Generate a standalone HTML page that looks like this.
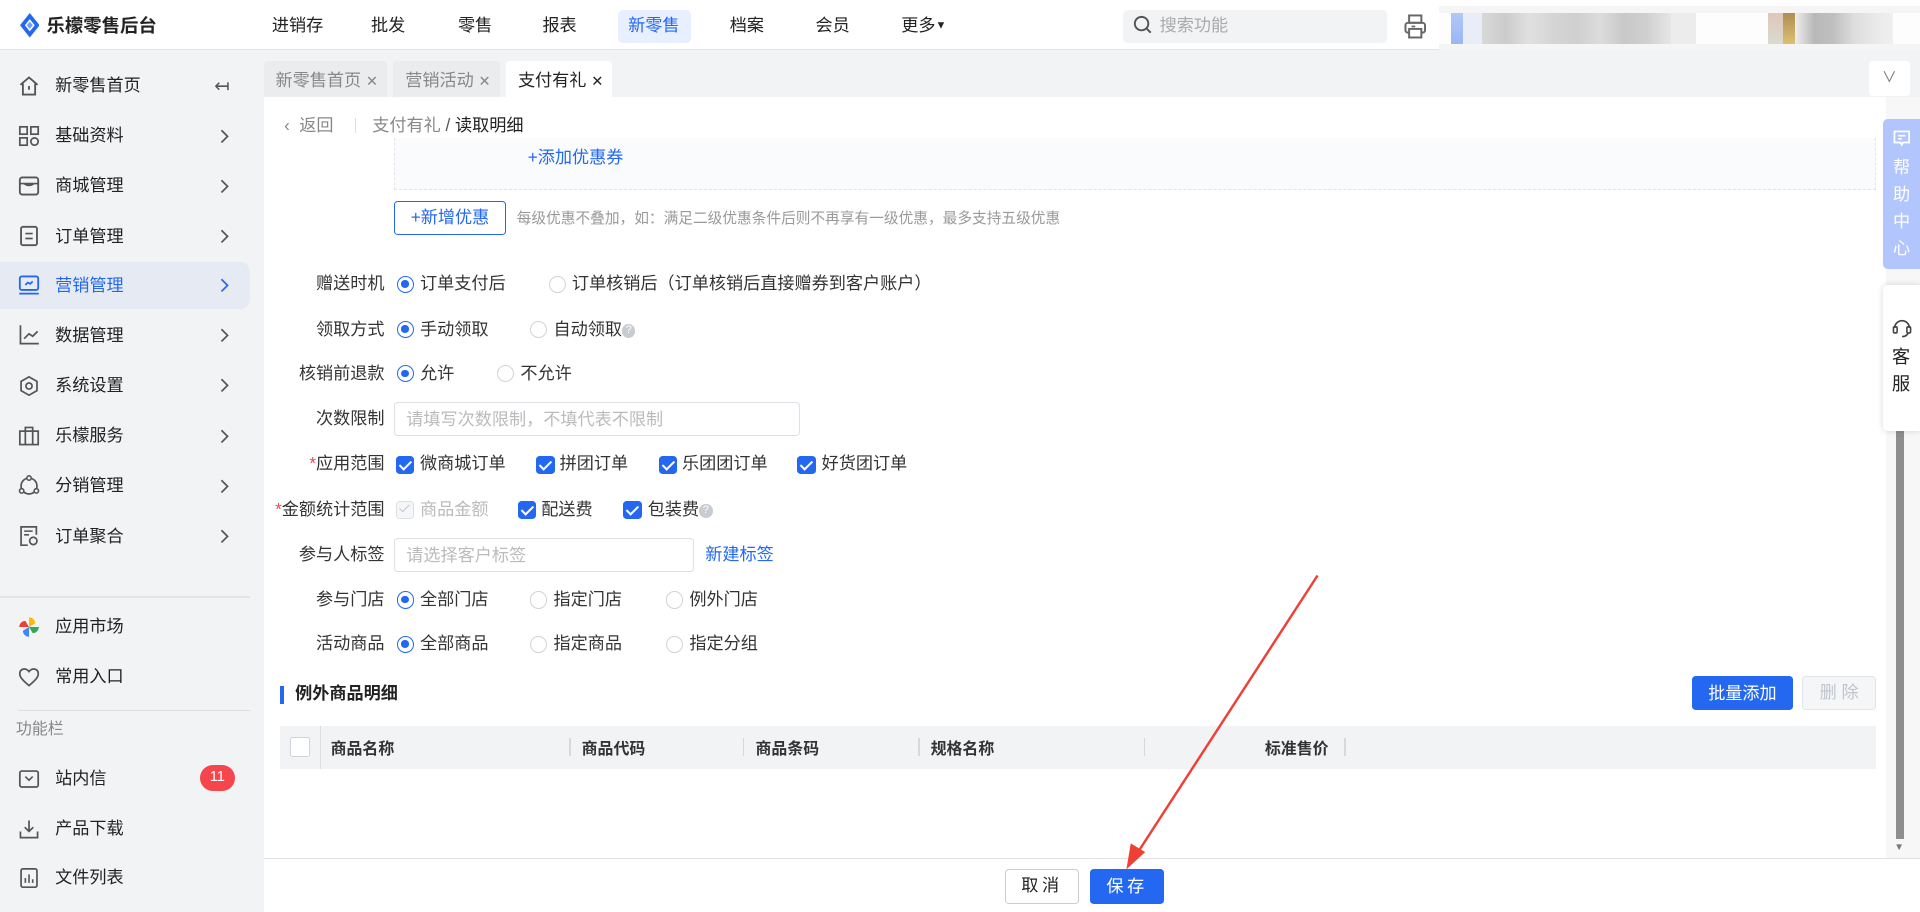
<!DOCTYPE html>
<html><head><meta charset="utf-8">
<style>
html{zoom:1.2244898}
*{box-sizing:border-box;margin:0;padding:0}
body{width:1568px;height:745px;overflow:hidden;position:relative;background:#fff;font-family:"Liberation Sans","Noto Sans CJK SC",sans-serif;color:#333;font-size:14px;line-height:1.15}
.a{position:absolute;white-space:nowrap}
.top{left:0;top:0;width:1568px;height:41px;background:#fff;border-bottom:1px solid #e3e3e3}
.nav{top:13px;font-size:14px;color:#222}
.side{left:0;top:41px;width:216px;height:704px;background:#f2f3f5}
.si{left:0;width:204px;height:38px;font-size:14px;color:#222}
.si .t{position:absolute;left:45px;top:11px}
.si svg.ic{position:absolute;left:15px;top:10px}
.si .ar{position:absolute;left:179px;top:13px}
.lbl{font-size:14px;color:#333;text-align:right;width:120px;left:194px}
.radio{width:14px;height:14px;border:1px solid #d0d3d9;border-radius:50%;background:#fff}
.radio.on{border:1px solid #2468f2}
.radio.on::after{content:"";position:absolute;left:3px;top:3px;width:6px;height:6px;border-radius:50%;background:#2468f2}
.cb{width:15px;height:15px;border-radius:3px;background:#2468f2}
.cb::after{content:"";position:absolute;left:5px;top:2px;width:4px;height:8px;border:solid #fff;border-width:0 2px 2px 0;transform:rotate(45deg)}
.q{display:inline-block;width:11px;height:11px;border-radius:50%;background:#c7cbd2;color:#fff;font-size:9px;line-height:11px;text-align:center;vertical-align:1px}
.th{top:605px;font-size:13px;font-weight:bold;color:#333}
.vd{width:1px;height:14px;background:#d8d8d8;top:603px}
</style></head><body>

<div class="a top"></div>
<svg class="a" style="left:16px;top:11px" width="16" height="20" viewBox="0 0 16 20"><path d="M8 0 L16 10 L8 20 L0 10 Z" fill="#2468f2"/><path d="M8 5 L12 10 L8 15 L4 10Z" fill="#fff"/><path d="M8 7 L10.5 10 L8 13 L5.5 10Z" fill="#6fa0ff"/></svg>
<div class="a" style="left:38px;top:12px;font-size:15px;font-weight:bold;color:#222">乐檬零售后台</div>
<div class="a nav" style="left:222px">进销存</div>
<div class="a nav" style="left:303px">批发</div>
<div class="a nav" style="left:374px">零售</div>
<div class="a nav" style="left:443px">报表</div>
<div class="a" style="left:505px;top:8px;width:59px;height:27px;background:#e8efff;border-radius:4px"></div>
<div class="a nav" style="left:513px;color:#2468f2">新零售</div>
<div class="a nav" style="left:596px">档案</div>
<div class="a nav" style="left:666px">会员</div>
<div class="a nav" style="left:736px">更多<span style="font-size:9px;vertical-align:2px">▼</span></div>
<div class="a" style="left:917px;top:8px;width:216px;height:27px;background:#f2f3f5;border-radius:4px"></div>
<svg class="a" style="left:925px;top:12px" width="16" height="16" viewBox="0 0 16 16"><circle cx="7" cy="7" r="5.5" fill="none" stroke="#555" stroke-width="1.6"/><path d="M11 11 L14.5 14.5" stroke="#555" stroke-width="1.6"/></svg>
<div class="a" style="left:947px;top:13px;font-size:14px;color:#aaa">搜索功能</div>
<svg class="a" style="left:1146px;top:11px" width="20" height="22" viewBox="0 0 20 22"><rect x="5" y="2" width="10" height="6" fill="none" stroke="#666" stroke-width="1.6"/><rect x="2" y="8" width="16" height="8" rx="2" fill="none" stroke="#666" stroke-width="1.6"/><rect x="5" y="13" width="10" height="7" fill="#fff" stroke="#666" stroke-width="1.6"/><path d="M7 11h3" stroke="#666" stroke-width="1.4"/></svg>
<div class="a" style="left:1175px;top:5px;width:393px;height:45px;background:#f5f5f5"></div>
<div class="a" style="left:1175px;top:11px;width:393px;height:25px;background:#fdfdfd"></div>
<div class="a" style="left:1185px;top:11px;width:10px;height:25px;background:linear-gradient(#b2c8f7,#99b6f5)"></div>
<div class="a" style="left:1195px;top:11px;width:15px;height:25px;background:#e8edf8"></div>
<div class="a" style="left:1210px;top:11px;width:155px;height:25px;background:linear-gradient(90deg,#d8d8d8,#ccc,#e0e0e0,#d5d5d5,#cfcfcf,#dcdcdc,#c8c8c8,#d0d0d0,#e6e6e6)"></div>
<div class="a" style="left:1365px;top:11px;width:20px;height:25px;background:#ececec"></div>
<div class="a" style="left:1444px;top:11px;width:12px;height:25px;background:linear-gradient(#e2c5bb,#d8dccf)"></div>
<div class="a" style="left:1456px;top:11px;width:10px;height:25px;background:linear-gradient(#b08d55,#dcc06f)"></div>
<div class="a" style="left:1466px;top:11px;width:80px;height:25px;background:linear-gradient(90deg,#eee,#b8b8b8,#c0c0c0,#ddd,#e8e8e8,#f0f0f0)"></div>

<div class="a side"></div>
<div class="a si" style="top:51px"><svg class="ic" width="18" height="18" viewBox="0 0 18 18"><path d="M2 8 L9 2 L16 8 M4 7 V16 H14 V7 M9 9 V12" fill="none" stroke="#555" stroke-width="1.5"/></svg><span class="t">新零售首页</span><span style="position:absolute;left:175px;top:10px;color:#555;font-size:15px">↤</span></div>
<div class="a si" style="top:92px"><svg class="ic" width="18" height="18" viewBox="0 0 18 18"><rect x="1.5" y="1.5" width="6" height="6" fill="none" stroke="#555" stroke-width="1.4"/><rect x="10.5" y="1.5" width="6" height="6" fill="none" stroke="#555" stroke-width="1.4"/><rect x="1.5" y="10.5" width="6" height="6" fill="none" stroke="#555" stroke-width="1.4"/><circle cx="13.5" cy="13.5" r="3" fill="none" stroke="#555" stroke-width="1.4"/></svg><span class="t">基础资料</span><svg class="ar" width="8" height="12" viewBox="0 0 8 12"><path d="M2 1l5 5-5 5" fill="none" stroke="#555" stroke-width="1.4"/></svg></div>
<div class="a si" style="top:133px"><svg class="ic" width="18" height="18" viewBox="0 0 18 18"><rect x="1.5" y="2" width="15" height="14" rx="2" fill="none" stroke="#555" stroke-width="1.5"/><path d="M1.5 7 H16.5 M5 7 Q9 10 13 7" fill="none" stroke="#555" stroke-width="1.4"/></svg><span class="t">商城管理</span><svg class="ar" width="8" height="12" viewBox="0 0 8 12"><path d="M2 1l5 5-5 5" fill="none" stroke="#555" stroke-width="1.4"/></svg></div>
<div class="a si" style="top:174px"><svg class="ic" width="18" height="18" viewBox="0 0 18 18"><rect x="2.5" y="1.5" width="13" height="15" rx="1.5" fill="none" stroke="#555" stroke-width="1.5"/><path d="M6 7h6M6 11h6" stroke="#555" stroke-width="1.4"/></svg><span class="t">订单管理</span><svg class="ar" width="8" height="12" viewBox="0 0 8 12"><path d="M2 1l5 5-5 5" fill="none" stroke="#555" stroke-width="1.4"/></svg></div>
<div class="a si" style="top:214px;background:#e6eaf3;border-radius:0 8px 8px 0;color:#2468f2"><svg class="ic" width="18" height="18" viewBox="0 0 18 18"><rect x="1.5" y="2" width="15" height="11" rx="1.5" fill="none" stroke="#2468f2" stroke-width="1.5"/><path d="M1 16h16M6 9l2-2 2 1 2-2" fill="none" stroke="#2468f2" stroke-width="1.4"/></svg><span class="t">营销管理</span><svg class="ar" width="8" height="12" viewBox="0 0 8 12"><path d="M2 1l5 5-5 5" fill="none" stroke="#2468f2" stroke-width="1.4"/></svg></div>
<div class="a si" style="top:255px"><svg class="ic" width="18" height="18" viewBox="0 0 18 18"><path d="M2 1V16H17M5 12l4-4 3 2 4-4" fill="none" stroke="#555" stroke-width="1.4"/></svg><span class="t">数据管理</span><svg class="ar" width="8" height="12" viewBox="0 0 8 12"><path d="M2 1l5 5-5 5" fill="none" stroke="#555" stroke-width="1.4"/></svg></div>
<div class="a si" style="top:296px"><svg class="ic" width="18" height="18" viewBox="0 0 18 18"><path d="M9 1.5 L15.5 5.2 V12.8 L9 16.5 L2.5 12.8 V5.2Z" fill="none" stroke="#555" stroke-width="1.4"/><circle cx="9" cy="9" r="2.5" fill="none" stroke="#555" stroke-width="1.4"/></svg><span class="t">系统设置</span><svg class="ar" width="8" height="12" viewBox="0 0 8 12"><path d="M2 1l5 5-5 5" fill="none" stroke="#555" stroke-width="1.4"/></svg></div>
<div class="a si" style="top:337px"><svg class="ic" width="18" height="18" viewBox="0 0 18 18"><rect x="1.5" y="5" width="15" height="11" fill="none" stroke="#555" stroke-width="1.4"/><path d="M6 5V2h6v3M6 5v11M12 5v11" fill="none" stroke="#555" stroke-width="1.4"/></svg><span class="t">乐檬服务</span><svg class="ar" width="8" height="12" viewBox="0 0 8 12"><path d="M2 1l5 5-5 5" fill="none" stroke="#555" stroke-width="1.4"/></svg></div>
<div class="a si" style="top:378px"><svg class="ic" width="18" height="18" viewBox="0 0 18 18"><circle cx="9" cy="9" r="6.5" fill="none" stroke="#555" stroke-width="1.4"/><circle cx="9" cy="2.5" r="1.8" fill="#f2f3f5" stroke="#555" stroke-width="1.3"/><circle cx="3" cy="13" r="1.8" fill="#f2f3f5" stroke="#555" stroke-width="1.3"/><circle cx="15" cy="13" r="1.8" fill="#f2f3f5" stroke="#555" stroke-width="1.3"/></svg><span class="t">分销管理</span><svg class="ar" width="8" height="12" viewBox="0 0 8 12"><path d="M2 1l5 5-5 5" fill="none" stroke="#555" stroke-width="1.4"/></svg></div>
<div class="a si" style="top:419px"><svg class="ic" width="18" height="18" viewBox="0 0 18 18"><path d="M15 8V1.5H2.5V16.5H8" fill="none" stroke="#555" stroke-width="1.4"/><path d="M5 5h7M5 8h4" stroke="#555" stroke-width="1.3"/><circle cx="12.5" cy="13" r="3" fill="none" stroke="#555" stroke-width="1.4"/></svg><span class="t">订单聚合</span><svg class="ar" width="8" height="12" viewBox="0 0 8 12"><path d="M2 1l5 5-5 5" fill="none" stroke="#555" stroke-width="1.4"/></svg></div>
<div class="a" style="left:0;top:487px;width:204px;height:1px;background:#e3e4e7"></div>
<div class="a si" style="top:493px"><svg class="ic" width="18" height="18" viewBox="0 0 18 18"><path d="M9 9 V1 A5 5 0 0 1 14 6Z" fill="#fbbc05"/><path d="M9 9 H17 A5 5 0 0 1 12 14Z" fill="#34a853"/><path d="M9 9 V17 A5 5 0 0 1 4 12Z" fill="#4285f4"/><path d="M9 9 H1 A5 5 0 0 1 6 4Z" fill="#ea4335"/></svg><span class="t">应用市场</span></div>
<div class="a si" style="top:534px"><svg class="ic" width="18" height="18" viewBox="0 0 18 18"><path d="M9 16 C3 11 1 8.5 1.5 5.5 C2 2.5 6 1 9 4.5 C12 1 16 2.5 16.5 5.5 C17 8.5 15 11 9 16Z" fill="none" stroke="#555" stroke-width="1.4"/></svg><span class="t">常用入口</span></div>
<div class="a" style="left:15px;top:580px;width:189px;height:1px;background:#dcdde0"></div>
<div class="a" style="left:13px;top:589px;font-size:13px;color:#888">功能栏</div>
<div class="a si" style="top:617px"><svg class="ic" width="18" height="18" viewBox="0 0 18 18"><rect x="1.5" y="2.5" width="15" height="13" rx="1.5" fill="none" stroke="#555" stroke-width="1.4"/><path d="M6 7l3 3 3-3" fill="none" stroke="#555" stroke-width="1.3"/></svg><span class="t">站内信</span><span style="position:absolute;left:163px;top:8px;width:29px;height:21px;border-radius:11px;background:#f5454d;color:#fff;font-size:12px;text-align:center;line-height:21px">11</span></div>
<div class="a si" style="top:658px"><svg class="ic" width="18" height="18" viewBox="0 0 18 18"><path d="M9 2v9M5.5 7.5 9 11l3.5-3.5M2 11v5h14v-5" fill="none" stroke="#555" stroke-width="1.4"/></svg><span class="t">产品下载</span></div>
<div class="a si" style="top:698px"><svg class="ic" width="18" height="18" viewBox="0 0 18 18"><rect x="2.5" y="1.5" width="13" height="15" rx="1.5" fill="none" stroke="#555" stroke-width="1.4"/><path d="M6 13V9M9 13V6M12 13V10" stroke="#555" stroke-width="1.3"/></svg><span class="t">文件列表</span></div>

<div class="a" style="left:216px;top:41px;width:1352px;height:38px;background:#f2f3f5"></div>
<div class="a" style="left:216px;top:50px;width:100px;height:29px;background:#ebecee;border-radius:3px 3px 0 0;color:#888;font-size:14px;padding:8px 0 0 9px">新零售首页 <span style="font-size:12px">✕</span></div>
<div class="a" style="left:321px;top:50px;width:87px;height:29px;background:#ebecee;border-radius:3px 3px 0 0;color:#888;font-size:14px;padding:8px 0 0 10px">营销活动 <span style="font-size:12px">✕</span></div>
<div class="a" style="left:413px;top:50px;width:87px;height:29px;background:#fff;border-radius:3px 3px 0 0;color:#222;font-size:14px;padding:8px 0 0 10px">支付有礼 <span style="font-size:12px">✕</span></div>
<div class="a" style="left:1526px;top:50px;width:34px;height:28px;background:#fff;border-radius:3px;color:#777;font-size:12px;text-align:center;line-height:28px">∨</div>

<div class="a" style="left:232px;top:95px;font-size:14px;color:#888">‹&nbsp; 返回</div>
<div class="a" style="left:290px;top:96px;width:1px;height:13px;background:#ddd"></div>
<div class="a" style="left:304px;top:95px;font-size:14px;color:#888">支付有礼 <span style="color:#555">/</span> <span style="color:#222">读取明细</span></div>

<div class="a" style="left:322px;top:113px;width:1210px;height:42px;background:#fafbfc;border:1px dashed #e2e4e8;border-top:none"></div>
<div class="a" style="left:431px;top:121px;font-size:14px;color:#2468f2">+添加优惠券</div>
<div class="a" style="left:322px;top:164px;width:91px;height:28px;border:1px solid #2468f2;border-radius:3px;color:#2468f2;font-size:14px;text-align:center;line-height:26px">+新增优惠</div>
<div class="a" style="left:422px;top:172px;font-size:12px;color:#999">每级优惠不叠加，如：满足二级优惠条件后则不再享有一级优惠，最多支持五级优惠</div>

<div class="a lbl" style="top:224px">赠送时机</div>
<div class="a radio on" style="left:324px;top:225px"></div><div class="a" style="left:343px;top:224px">订单支付后</div>
<div class="a radio" style="left:448px;top:225px"></div><div class="a" style="left:467px;top:224px">订单核销后（订单核销后直接赠券到客户账户）</div>

<div class="a lbl" style="top:261px">领取方式</div>
<div class="a radio on" style="left:324px;top:262px"></div><div class="a" style="left:343px;top:261px">手动领取</div>
<div class="a radio" style="left:433px;top:262px"></div><div class="a" style="left:452px;top:261px">自动领取<span class="q">?</span></div>

<div class="a lbl" style="top:297px">核销前退款</div>
<div class="a radio on" style="left:324px;top:298px"></div><div class="a" style="left:343px;top:297px">允许</div>
<div class="a radio" style="left:406px;top:298px"></div><div class="a" style="left:425px;top:297px">不允许</div>

<div class="a lbl" style="top:334px">次数限制</div>
<div class="a" style="left:322px;top:328px;width:331px;height:28px;border:1px solid #dcdfe6;border-radius:3px;color:#bbb;font-size:14px;padding:6px 0 0 9px">请填写次数限制，不填代表不限制</div>

<div class="a lbl" style="top:371px"><span style="color:#f5454d">*</span>应用范围</div>
<div class="a cb" style="left:323px;top:372px"></div><div class="a" style="left:343px;top:371px">微商城订单</div>
<div class="a cb" style="left:438px;top:372px"></div><div class="a" style="left:457px;top:371px">拼团订单</div>
<div class="a cb" style="left:538px;top:372px"></div><div class="a" style="left:557px;top:371px">乐团团订单</div>
<div class="a cb" style="left:651px;top:372px"></div><div class="a" style="left:671px;top:371px">好货团订单</div>

<div class="a lbl" style="top:408px"><span style="color:#f5454d">*</span>金额统计范围</div>
<div class="a" style="left:323px;top:409px;width:15px;height:15px;border:1px solid #dcdfe6;border-radius:3px;background:#f5f6f8"></div>
<div class="a" style="left:328px;top:410px;width:4px;height:8px;border:solid #c0c4cc;border-width:0 1.5px 1.5px 0;transform:rotate(45deg)"></div>
<div class="a" style="left:343px;top:408px;color:#bbb">商品金额</div>
<div class="a cb" style="left:423px;top:409px"></div><div class="a" style="left:442px;top:408px">配送费</div>
<div class="a cb" style="left:509px;top:409px"></div><div class="a" style="left:529px;top:408px">包装费<span class="q">?</span></div>

<div class="a lbl" style="top:445px">参与人标签</div>
<div class="a" style="left:322px;top:439px;width:245px;height:28px;border:1px solid #dcdfe6;border-radius:3px;color:#bbb;font-size:14px;padding:6px 0 0 9px">请选择客户标签</div>
<div class="a" style="left:576px;top:445px;color:#2468f2">新建标签</div>

<div class="a lbl" style="top:482px">参与门店</div>
<div class="a radio on" style="left:324px;top:483px"></div><div class="a" style="left:343px;top:482px">全部门店</div>
<div class="a radio" style="left:433px;top:483px"></div><div class="a" style="left:452px;top:482px">指定门店</div>
<div class="a radio" style="left:544px;top:483px"></div><div class="a" style="left:563px;top:482px">例外门店</div>

<div class="a lbl" style="top:518px">活动商品</div>
<div class="a radio on" style="left:324px;top:519px"></div><div class="a" style="left:343px;top:518px">全部商品</div>
<div class="a radio" style="left:433px;top:519px"></div><div class="a" style="left:452px;top:518px">指定商品</div>
<div class="a radio" style="left:544px;top:519px"></div><div class="a" style="left:563px;top:518px">指定分组</div>

<div class="a" style="left:229px;top:560px;width:3px;height:15px;background:#2468f2"></div>
<div class="a" style="left:241px;top:559px;font-size:14px;font-weight:bold;color:#222">例外商品明细</div>
<div class="a" style="left:1382px;top:552px;width:82px;height:28px;background:#2468f2;border-radius:3px;color:#fff;text-align:center;line-height:28px">批量添加</div>
<div class="a" style="left:1472px;top:552px;width:60px;height:28px;background:#f5f6f8;border:1px solid #e2e4e8;border-radius:3px;color:#c0c4cc;text-align:center;line-height:26px">删 除</div>

<div class="a" style="left:229px;top:593px;width:1303px;height:35px;background:#f2f3f5"></div>
<div class="a" style="left:237px;top:602px;width:16px;height:16px;border:1px solid #d0d3d9;background:#fff;border-radius:2px"></div>
<div class="a" style="left:261px;top:593px;width:1px;height:35px;background:#dcdde0"></div>
<div class="a th" style="left:270px">商品名称</div>
<div class="a vd" style="left:465px"></div><div class="a th" style="left:475px">商品代码</div>
<div class="a vd" style="left:607px"></div><div class="a th" style="left:617px">商品条码</div>
<div class="a vd" style="left:750px"></div><div class="a th" style="left:760px">规格名称</div>
<div class="a vd" style="left:934px"></div>
<div class="a th" style="left:1033px">标准售价</div>
<div class="a vd" style="left:1098px"></div>

<div class="a" style="left:1540px;top:79px;width:28px;height:622px;background:#f7f7f7"></div>
<div class="a" style="left:1548px;top:340px;width:7px;height:345px;background:#8e8e8e"></div>
<div class="a" style="left:1547px;top:688px;font-size:8px;color:#777">▼</div>

<div class="a" style="left:216px;top:701px;width:1352px;height:44px;background:#fff;border-top:1px solid #e0e0e0"></div>
<div class="a" style="left:821px;top:710px;width:60px;height:28px;border:1px solid #ccc;border-radius:3px;text-align:center;line-height:26px;color:#222;letter-spacing:3px">取消</div>
<div class="a" style="left:890px;top:710px;width:61px;height:28px;background:#2468f2;border-radius:3px;text-align:center;line-height:28px;color:#fff;letter-spacing:3px">保存</div>

<div class="a" style="left:1538px;top:97px;width:30px;height:123px;background:#b3c5fd;border-radius:4px 0 0 4px"></div>
<svg class="a" style="left:1545px;top:105px" width="16" height="16" viewBox="0 0 16 16"><path d="M2 2h12v9H9l-1 2-1-2H2Z" fill="none" stroke="#fff" stroke-width="1.4"/><path d="M5 5.5h6M5 8h3" stroke="#fff" stroke-width="1.3"/></svg>
<div class="a" style="left:1546px;top:126px;width:14px;font-size:14px;color:#fff;white-space:normal;line-height:22px">帮助中心</div>
<div class="a" style="left:1538px;top:233px;width:30px;height:119px;background:#fff;border-radius:4px 0 0 4px;box-shadow:0 0 5px rgba(0,0,0,.15)"></div>
<svg class="a" style="left:1544px;top:259px" width="18" height="18" viewBox="0 0 18 18"><path d="M3 9 A6 6 0 0 1 15 9" fill="none" stroke="#444" stroke-width="1.4"/><rect x="2" y="8" width="3" height="5" rx="1" fill="none" stroke="#444" stroke-width="1.3"/><rect x="13" y="8" width="3" height="5" rx="1" fill="none" stroke="#444" stroke-width="1.3"/><path d="M14 13 Q13 16 9 16" fill="none" stroke="#444" stroke-width="1.3"/></svg>
<div class="a" style="left:1545px;top:281px;width:16px;font-size:15px;color:#222;white-space:normal;line-height:22px">客服</div>

<svg class="a" style="left:0;top:0" width="1568" height="745" viewBox="0 0 1568 745"><path d="M1076 470 L928 698" stroke="#ee4035" stroke-width="2" fill="none"/><path d="M921 708 L924 690 L934 696Z" fill="#ee4035" stroke="#ee4035" stroke-width="1.5"/></svg>
</body></html>
